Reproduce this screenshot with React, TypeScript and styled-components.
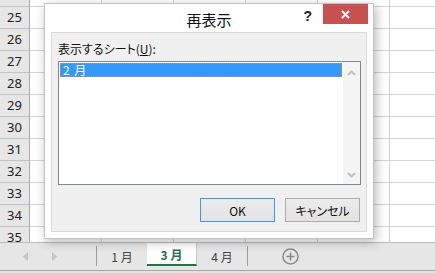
import styled, { createGlobalStyle } from "styled-components";

/* ── Globals ─────────────────────────────────────────────── */

const GlobalStyle = createGlobalStyle`
  html, body {
    margin: 0;
    padding: 0;
  }
  body {
    width: 435px;
    height: 273px;
    overflow: hidden;
    background: #fff;
    font-family: "Noto Sans", sans-serif;
  }
`;

const jp = `"Noto Sans CJK JP", "Noto Sans", sans-serif`;

/* ── Spreadsheet ─────────────────────────────────────────── */

const Window = styled.div`
  position: relative;
  width: 435px;
  height: 273px;
  display: flex;
  flex-direction: column;
  background: #e3e3e3;
  overflow: hidden;
`;

const Sheet = styled.div`
  flex: none;
  height: 242px;
  overflow: hidden;
  background: #fff;
`;

const Rows = styled.div`
  margin-top: -15px;
`;

const Row = styled.div`
  display: flex;
  height: 22px;
`;

const RowHeader = styled.div`
  flex: none;
  width: 30px;
  box-sizing: border-box;
  background: #e6e6e6;
  border-right: 1px solid #ababab;
  border-bottom: 1px solid #c3c3c3;
  text-align: center;
  font-size: 13px;
  line-height: 21px;
  color: #222;
`;

const Cell = styled.div`
  flex: none;
  width: 72px;
  box-sizing: border-box;
  border-right: 1px solid #d4d4d4;
  border-bottom: 1px solid #d4d4d4;
`;

const TabBar = styled.div`
  flex: none;
  height: 27px;
  display: flex;
  align-items: flex-start;
  background: #e6e6e6;
  border-top: 1px solid #bcbcbc;
  border-bottom: 1px solid #a8a8a8;
  font-family: ${jp};
`;

const Nav = styled.div`
  width: 96px;
  height: 27px;
  display: flex;
  align-items: center;
  gap: 24px;
  padding-left: 23px;
  box-sizing: border-box;
`;

const Divider = styled.div`
  width: 1px;
  height: 20px;
  margin-top: 3px;
  background: #9e9e9e;
`;

const Tab = styled.div<{ $active?: boolean }>`
  width: 50px;
  height: ${(p) => (p.$active ? "23px" : "25px")};
  box-sizing: border-box;
  display: flex;
  align-items: center;
  justify-content: center;
  font-size: 12px;
  padding-top: 2px;
  color: ${(p) => (p.$active ? "#217346" : "#444")};
  font-weight: ${(p) => (p.$active ? 700 : 400)};
  background: ${(p) => (p.$active ? "#fff" : "transparent")};
  border-bottom: ${(p) => (p.$active ? "2px solid #217346" : "none")};
  border-right: ${(p) => (p.$active ? "1px solid #c8c8c8" : "none")};
`;

const AddSheet = styled.div`
  height: 27px;
  display: flex;
  align-items: center;
  padding-left: 34px;
`;

/* ── Dialog ──────────────────────────────────────────────── */

const Dialog = styled.div`
  position: absolute;
  left: 44px;
  top: 3px;
  width: 330px;
  box-sizing: border-box;
  background: #fff;
  border: 1px solid #c2c2c2;
  box-shadow: 2px 3px 10px rgba(0, 0, 0, 0.28);
  padding: 0 6px 6px;
  font-family: ${jp};
  font-feature-settings: "palt";
`;

const TitleBar = styled.div`
  height: 28px;
  margin: 0 -6px;
  display: grid;
  grid-template-columns: 1fr auto 1fr;
`;

const Title = styled.div`
  grid-column: 2;
  font-size: 15px;
  line-height: 18px;
  padding-top: 7px;
  color: #111;
`;

const Controls = styled.div`
  display: flex;
  justify-content: flex-end;
  align-items: flex-start;
  padding-right: 5px;
`;

const Help = styled.div`
  font-family: "Liberation Sans", sans-serif;
  font-weight: 700;
  font-size: 14px;
  line-height: 14px;
  color: #222;
  margin: 5px 11px 0 0;
`;

const Close = styled.div`
  width: 45px;
  height: 20px;
  background: #c75050;
  display: flex;
  align-items: center;
  justify-content: center;
`;

const Panel = styled.div`
  height: 200px;
  box-sizing: border-box;
  border: 1px solid #dadada;
  background: #f0f0f0;
  padding: 8px 5px 0 6px;
  display: flex;
  flex-direction: column;
`;

const Label = styled.div`
  font-size: 12px;
  line-height: 16px;
  color: #111;
`;

const ListBox = styled.div`
  margin-top: 4px;
  height: 124px;
  box-sizing: border-box;
  border: 1px solid #828790;
  background: #fff;
  display: flex;
`;

const Items = styled.div`
  flex: 1;
  padding: 1px;
`;

const Item = styled.div<{ $selected?: boolean }>`
  height: 14px;
  box-sizing: border-box;
  padding-left: 2px;
  font-size: 12px;
  line-height: 12px;
  font-feature-settings: normal;
  word-spacing: 2px;
  color: ${(p) => (p.$selected ? "#fff" : "#000")};
  background: ${(p) => (p.$selected ? "#3399ff" : "transparent")};
  border: 1px dotted ${(p) => (p.$selected ? "#d08a50" : "transparent")};
`;

const ScrollBar = styled.div`
  width: 17px;
  background: #f4f4f4;
  display: flex;
  flex-direction: column;
  justify-content: space-between;
  align-items: center;
  padding: 8px 0 6px;
`;

const Buttons = styled.div`
  margin-top: 13px;
  display: flex;
  justify-content: flex-end;
  gap: 10px;
  padding-right: 1px;
`;

const Button = styled.div<{ $default?: boolean }>`
  width: 75px;
  height: 24px;
  box-sizing: border-box;
  display: flex;
  align-items: center;
  justify-content: center;
  font-size: 12px;
  color: #111;
  background: linear-gradient(#ececec, #e2e2e2);
  border: 1px solid ${(p) => (p.$default ? "#3c9af0" : "#adadad")};
`;

/* ── Icons ───────────────────────────────────────────────── */

const Arrow = ({ dir }: { dir: "left" | "right" }) => (
  <svg width="5" height="9" viewBox="0 0 5 9">
    <path
      d={dir === "left" ? "M5 0 L0 4.5 L5 9 Z" : "M0 0 L5 4.5 L0 9 Z"}
      fill="#c6c6c6"
    />
  </svg>
);

const Chevron = ({ up }: { up?: boolean }) => (
  <svg width="9" height="6" viewBox="0 0 9 6">
    <path
      d={up ? "M1 5 L4.5 1.5 L8 5" : "M1 1 L4.5 4.5 L8 1"}
      fill="none"
      stroke="#c4c4c4"
      strokeWidth="2"
    />
  </svg>
);

/* ── Component ───────────────────────────────────────────── */

const rows = [24, 25, 26, 27, 28, 29, 30, 31, 32, 33, 34, 35];

export default function App() {
  return (
    <>
      <GlobalStyle />
      <Window>
        <Sheet>
          <Rows>
            {rows.map((n) => (
              <Row key={n}>
                <RowHeader>{n}</RowHeader>
                {[0, 1, 2, 3, 4, 5].map((c) => (
                  <Cell key={c} />
                ))}
              </Row>
            ))}
          </Rows>
        </Sheet>

        <TabBar>
          <Nav>
            <Arrow dir="left" />
            <Arrow dir="right" />
          </Nav>
          <Divider />
          <Tab>1 月</Tab>
          <Tab $active>3 月</Tab>
          <Tab>4 月</Tab>
          <Divider />
          <AddSheet>
            <svg width="17" height="17" viewBox="0 0 17 17">
              <circle cx="8.5" cy="8.5" r="7.5" fill="none" stroke="#8a8a8a" strokeWidth="1.5" />
              <path d="M8.5 4.5 V12.5 M4.5 8.5 H12.5" stroke="#8a8a8a" strokeWidth="1.6" />
            </svg>
          </AddSheet>
        </TabBar>

        <Dialog>
          <TitleBar>
            <Title>再表示</Title>
            <Controls>
              <Help>?</Help>
              <Close>
                <svg width="9" height="9" viewBox="0 0 9 9">
                  <path d="M1 1 L8 8 M8 1 L1 8" stroke="#fff" strokeWidth="2" />
                </svg>
              </Close>
            </Controls>
          </TitleBar>
          <Panel>
            <Label>
              表示するシート(<u>U</u>):
            </Label>
            <ListBox>
              <Items>
                <Item $selected>2 月</Item>
              </Items>
              <ScrollBar>
                <Chevron up />
                <Chevron />
              </ScrollBar>
            </ListBox>
            <Buttons>
              <Button $default>OK</Button>
              <Button>キャンセル</Button>
            </Buttons>
          </Panel>
        </Dialog>
      </Window>
    </>
  );
}
